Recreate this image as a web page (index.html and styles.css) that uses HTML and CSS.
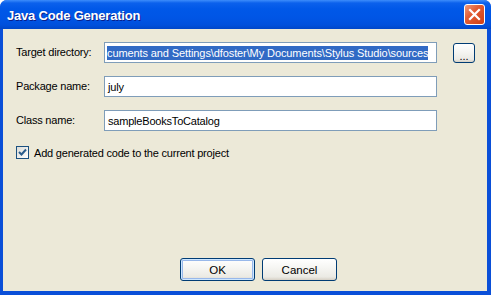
FILE: index.html
```html
<!DOCTYPE html>
<html lang="en">
<head>
    <meta charset="UTF-8">
    <meta name="viewport" content="width=device-width, initial-scale=1.0">
    <title>Java Code Generation</title>
    <link rel="stylesheet" href="styles.css">
</head>
<body>
    <div class="window">
        <div class="titlebar">
            <span class="title">Java Code Generation</span>
            <span class="close">
                <svg width="13" height="13" viewBox="0 0 13 13">
                    <path d="M2 2 L11 11 M11 2 L2 11" stroke="#fff" stroke-width="2.2" stroke-linecap="square"/>
                </svg>
            </span>
        </div>
        <div class="content">
            <div class="fields">
                <label class="label">Target directory:</label>
                <div class="field path">
                    <span class="selected">cuments and Settings\dfoster\My Documents\Stylus Studio\sources</span>
                </div>
                <button class="btn browse" type="button">...</button>

                <label class="label">Package name:</label>
                <div class="field">july</div>
                <span></span>

                <label class="label">Class name:</label>
                <div class="field">sampleBooksToCatalog</div>
                <span></span>
            </div>

            <div class="check-row">
                <span class="checkbox">
                    <svg width="9" height="9" viewBox="0 0 9 9">
                        <path d="M1 4 L3.5 6.5 L8 1.5" fill="none" stroke="#2b5d8c" stroke-width="2"/>
                    </svg>
                </span>
                <span>Add generated code to the current project</span>
            </div>

            <div class="footer">
                <button class="btn default" type="button">OK</button>
                <button class="btn" type="button">Cancel</button>
            </div>
        </div>
    </div>
</body>
</html>
```

FILE: styles.css
```css
body {
    margin: 0;
    padding: 0;
    font-family: 'Liberation Sans', Arial, sans-serif;
    font-size: 11px;
    letter-spacing: -0.2px;
    color: #000;
    background: #fff;
}
.window {
    width: 491px;
    height: 295px;
    display: flex;
    flex-direction: column;
    background: #0a4fd8;
    border-radius: 7px 7px 0 0;
    overflow: hidden;
}
/* title bar */
.titlebar {
    height: 29px;
    flex: none;
    display: flex;
    align-items: center;
    justify-content: space-between;
    padding: 0 6px 0 7px;
    background: linear-gradient(#3d8dfb 0, #0b61ec 3px, #0058e8 9px, #0055e5 18px, #0050dc 25px, #0046c8 29px);
}
.title {
    color: #fff;
    font-weight: bold;
    font-size: 13px;
    letter-spacing: -0.2px;
    text-shadow: 1px 1px 0 #0a1e8a;
    padding-top: 1px;
}
.close {
    width: 19px;
    height: 19px;
    border: 1px solid #fff;
    border-radius: 3px;
    background: linear-gradient(135deg, #f09b7c 0, #e35d35 40%, #cf3f13 100%);
    display: flex;
    align-items: center;
    justify-content: center;
}
/* client area */
.content {
    flex: 1;
    display: flex;
    flex-direction: column;
    background: #ece9d8;
    margin: 0 4px 4px 3px;
    padding: 13px 0 0 13px;
}
.fields {
    display: grid;
    grid-template-columns: 88px 333px 38px;
    grid-auto-rows: 21px;
    row-gap: 13px;
    align-items: center;
}
.label {
    padding-bottom: 1px;
}
.field {
    height: 21px;
    box-sizing: border-box;
    border: 1px solid #7f9db9;
    background: #fff;
    padding: 0 3px;
    display: flex;
    align-items: center;
    white-space: nowrap;
    overflow: hidden;
}
.path {
    padding-left: 2px;
}
.selected {
    background: #316ac5;
    color: #fff;
    line-height: 14px;
    letter-spacing: -0.1px;
}
.btn {
    font-family: 'Liberation Sans', Arial, sans-serif;
    font-size: 11px;
    color: #000;
    border: 1px solid #003c74;
    border-radius: 3px;
    background: linear-gradient(#ffffff 0, #f6f6f3 40%, #ebeae4 85%, #d6d0c5 100%);
    box-sizing: border-box;
    padding: 0;
}
.browse {
    width: 22px;
    height: 20px;
    justify-self: end;
    line-height: 20px;
    padding-top: 2px;
}
.check-row {
    display: flex;
    align-items: center;
    gap: 5px;
    margin-top: 15px;
}
.checkbox {
    width: 13px;
    height: 13px;
    box-sizing: border-box;
    border: 1px solid #1c5180;
    background: linear-gradient(135deg, #dcdcd7 0, #fff 100%);
    display: flex;
    align-items: center;
    justify-content: center;
}
.footer {
    margin-top: auto;
    margin-bottom: 10px;
    padding-left: 164px;
    display: flex;
    gap: 7px;
}
.footer .btn {
    width: 75px;
    height: 23px;
    font-size: 11.5px;
}
.default {
    box-shadow: inset 0 0 0 1px #cee7ff, inset 0 0 0 2px #98b8ea;
}
```
